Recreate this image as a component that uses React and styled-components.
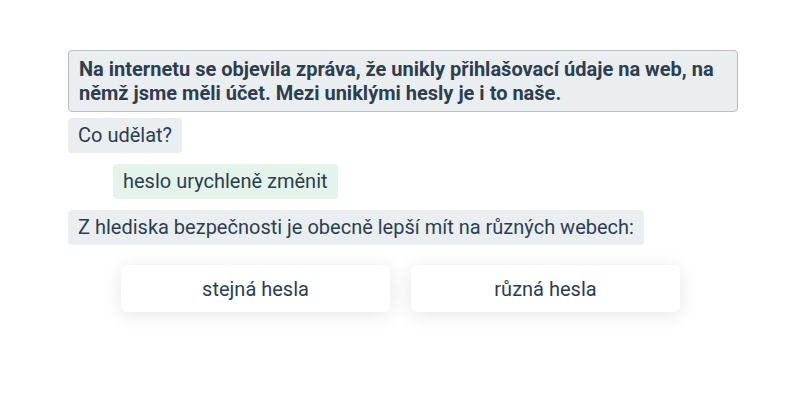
import React from 'react'
import styled, { createGlobalStyle } from 'styled-components'

const GlobalStyle = createGlobalStyle`
    body {
        margin: 0;
        background: #ffffff;
        font-family: Roboto, "Liberation Sans", sans-serif;
        color: #2c3e50;
    }
`

const Chat = styled.div`
    width: 670px;
    margin: 0 0 0 68px;
    padding-top: 50px;
    padding-bottom: 40px;
    display: flex;
    flex-direction: column;
    align-items: flex-start;
`

const Question = styled.div`
    box-sizing: border-box;
    width: 100%;
    padding: 6px 10px 6px 10px;
    background: #ebeef0;
    border: 1px solid #b9bec3;
    border-radius: 4px;
    font-size: 20px;
    font-weight: 700;
    line-height: 24px;
`

const Bubble = styled.div`
    padding: 0 10px;
    line-height: 35px;
    font-size: 20px;
    border-radius: 4px;
    background: ${p => p.$answer ? '#e4f4ea' : '#ebeef0'};
    margin-top: ${p => p.$gap}px;
    margin-left: ${p => p.$answer ? 45 : 0}px;
`

const Choices = styled.div`
    display: flex;
    gap: 21px;
    padding-left: 53px;
    margin-top: 20px;
`

const Choice = styled.button`
    width: 269px;
    height: 47px;
    border: none;
    border-radius: 6px;
    background: #ffffff;
    box-shadow: 0 3px 20px rgba(0, 0, 0, 0.1);
    font-family: Roboto, "Liberation Sans", sans-serif;
    font-size: 20px;
    color: #2c3e50;
    cursor: pointer;
`

export default function App() {
    return (
        <>
            <GlobalStyle />
            <Chat>
                <Question>
                    Na internetu se objevila zpráva, že unikly přihlašovací údaje na web, na němž jsme měli účet. Mezi uniklými hesly je i to naše.
                </Question>
                <Bubble $gap={6}>Co udělat?</Bubble>
                <Bubble $answer $gap={11}>heslo urychleně změnit</Bubble>
                <Bubble $gap={11}>Z hlediska bezpečnosti je obecně lepší mít na různých webech:</Bubble>
                <Choices>
                    <Choice>stejná hesla</Choice>
                    <Choice>různá hesla</Choice>
                </Choices>
            </Chat>
        </>
    )
}
